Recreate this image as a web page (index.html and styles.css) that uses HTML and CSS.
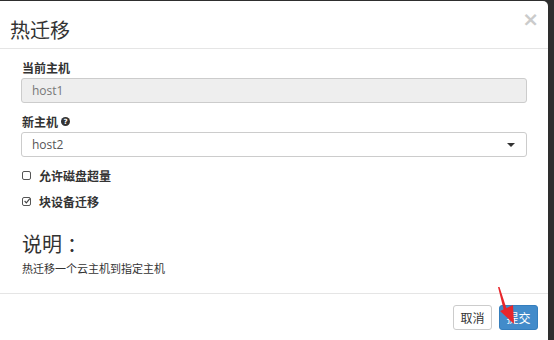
FILE: index.html
```html
<!DOCTYPE html>
<html lang="zh-CN">
<head>
    <meta charset="UTF-8">
    <title>热迁移</title>
    <link rel="stylesheet" href="styles.css">
</head>
<body>
    <div class="modal">
        <div class="modal-header">
            <h3>热迁移</h3>
            <span class="close">&times;</span>
        </div>
        <div class="modal-body">
            <div class="group">
                <label class="label">当前主机</label>
                <div class="input disabled">host1</div>
            </div>
            <div class="group">
                <label class="label">新主机
                    <svg class="help" width="9" height="9" viewBox="0 0 10 10">
                        <circle cx="5" cy="5" r="5" fill="#333"/>
                        <text x="5" y="8.3" font-size="8" font-weight="bold" text-anchor="middle" fill="#fff" font-family="DejaVu Sans">?</text>
                    </svg>
                </label>
                <div class="input select">host2<span class="caret"></span></div>
            </div>
            <div class="check">
                <span class="box"></span>允许磁盘超量
            </div>
            <div class="check">
                <span class="box checked">
                    <svg width="10" height="10" viewBox="0 0 10 10"><path d="M2 5 L4.2 7.3 L8.5 2" stroke="#444" stroke-width="1.4" fill="none"/></svg>
                </span>块设备迁移
            </div>
            <h3 class="desc-title">说明<span class="colon">：</span></h3>
            <p class="desc">热迁移一个云主机到指定主机</p>
        </div>
        <div class="modal-footer">
            <button class="btn">取消</button>
            <button class="btn primary">提交</button>
            <svg class="arrow" width="30" height="50" viewBox="0 0 30 50">
                <path d="M0 0 L1.5 0 L9 23 L6 24 Z" fill="#e8262b"/>
                <path d="M2 24 L15 18 L16 37 Z" fill="#e8262b"/>
            </svg>
        </div>
    </div>
</body>
</html>
```

FILE: styles.css
```css
body {
    margin: 0;
    padding: 0;
    width: 554px;
    height: 340px;
    background: #2e2e2e;
    overflow: hidden;
    font-family: "Open Sans", "Noto Sans CJK SC", sans-serif;
    color: #333;
}
.modal {
    margin-top: 1px;
    width: 548px;
    height: 339px;
    background: #fff;
    border-top-right-radius: 5px;
    display: flex;
    flex-direction: column;
}
.modal-header {
    border-bottom: 1px solid #e5e5e5;
    display: flex;
    align-items: center;
    justify-content: space-between;
    padding: 9px 9px 0 10px;
    box-sizing: border-box;
    height: 48px;
}
.modal-header h3 {
    margin: 0;
    font-size: 20px;
    font-weight: normal;
    color: #333;
}
.close {
    font-size: 20px;
    font-weight: bold;
    color: #cbcbcb;
    font-family: "DejaVu Sans", sans-serif;
    margin-top: -20px;
}
.modal-body {
    padding: 10px 21px 0 21px;
    height: 234px;
}
.group {
    margin-bottom: 10px;
}
.label {
    display: flex;
    align-items: center;
    gap: 3px;
    font-family: "Noto Sans CJK SC", sans-serif;
    font-size: 12px;
    font-weight: bold;
    padding-left: 1px;
    height: 17px;
    margin-bottom: 2px;
}
.input {
    box-sizing: border-box;
    height: 25px;
    border: 1px solid #ccc;
    border-radius: 3px;
    padding: 0 10px;
    font-size: 12px;
    line-height: 23px;
    color: #555;
    display: flex;
    justify-content: space-between;
    align-items: center;
}
.input.disabled {
    background: #eee;
    color: #777;
}
.caret {
    width: 0;
    height: 0;
    border-left: 4px solid transparent;
    border-right: 4px solid transparent;
    border-top: 4px solid #333;
    margin-right: 1px;
}
.check {
    display: flex;
    align-items: center;
    font-family: "Noto Sans CJK SC", sans-serif;
    font-size: 12px;
    font-weight: bold;
    color: #333;
    height: 17px;
    margin-bottom: 9px;
    padding-left: 1px;
}
.check:first-of-type {
    margin-top: -2px;
}
.box {
    box-sizing: border-box;
    width: 9px;
    height: 9px;
    border: 1px solid #555;
    border-radius: 2px;
    margin-right: 8px;
    display: flex;
    align-items: center;
    justify-content: center;
}
.box.checked svg {
    margin: -1px -1px 0 0;
}
.desc-title {
    margin: 20px 0 0 1px;
    font-family: "Noto Sans CJK SC", sans-serif;
    font-size: 20px;
    font-weight: normal;
    line-height: 28px;
}
.colon {
    margin-left: 5px;
}
.desc {
    margin: 2px 0 0 1px;
    font-family: "Noto Sans CJK SC", sans-serif;
    font-size: 11px;
}
.modal-footer {
    border-top: 1px solid #e5e5e5;
    flex: 1;
    display: flex;
    justify-content: flex-end;
    align-items: flex-start;
    gap: 7px;
    padding: 11px 10px 0 0;
    position: relative;
}
.btn {
    height: 25px;
    width: 39px;
    border: 1px solid #ccc;
    border-radius: 3px;
    background: #fff;
    font-family: "Noto Sans CJK SC", sans-serif;
    font-size: 12px;
    color: #333;
    padding: 0;
}
.btn.primary {
    background: #428bca;
    border-color: #357ebd;
    color: #fff;
}
.arrow {
    position: absolute;
    left: 498px;
    top: -7px;
}
```
